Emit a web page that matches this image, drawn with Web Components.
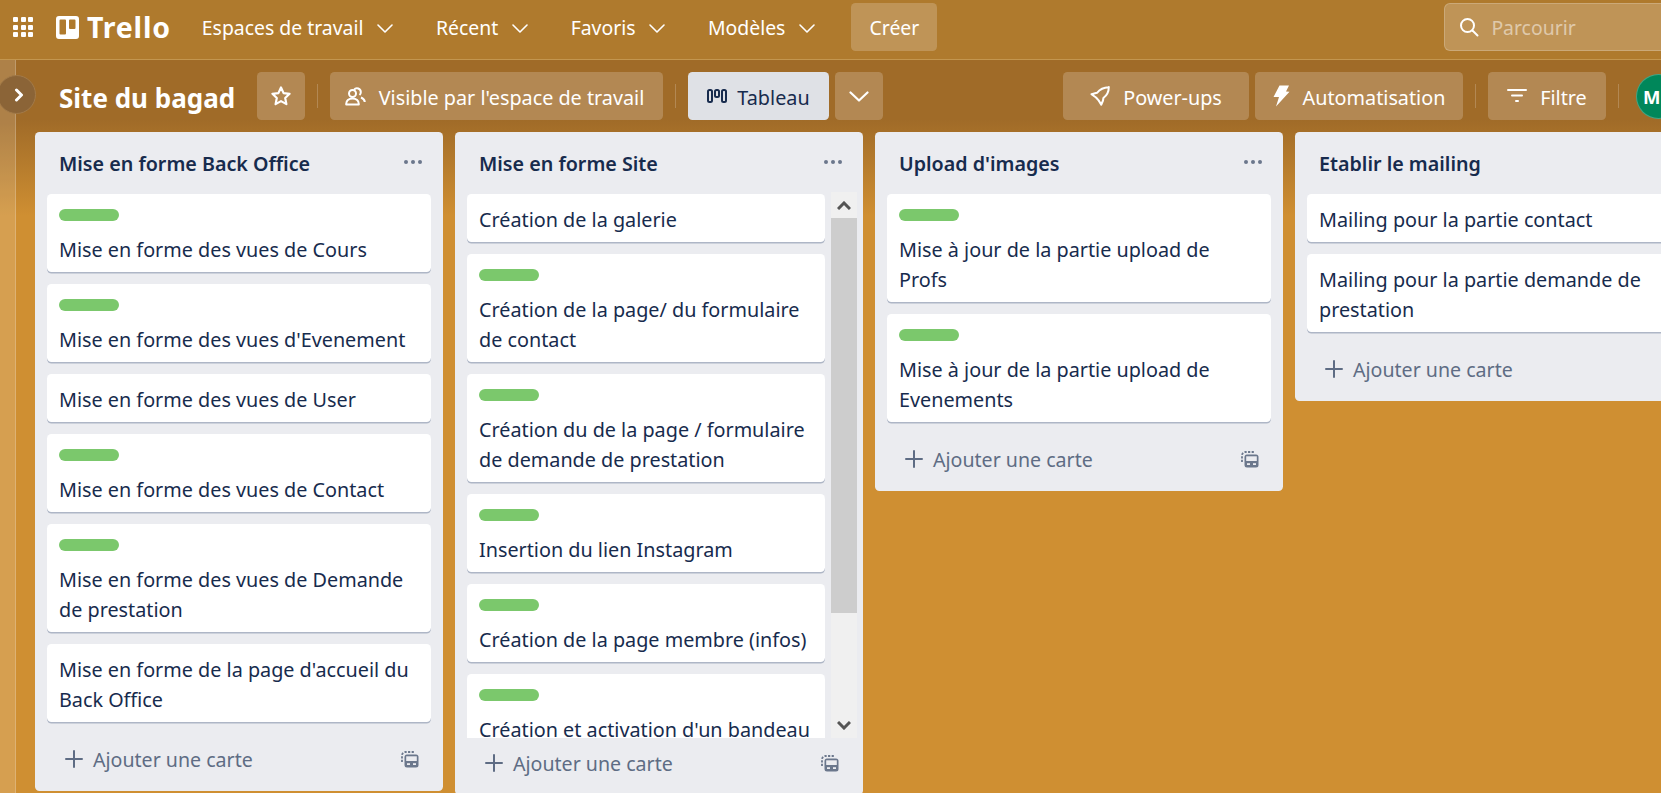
<!DOCTYPE html>
<html lang="fr">
<head>
<meta charset="utf-8">
<title>Site du bagad</title>
<style>
html, body { margin: 0; height: 793px; overflow: hidden; }
body { width: 1661px; font-family: "Noto Sans", "Open Sans", sans-serif; font-size: 19.8px; color: #172B4D; background: #CF8F32; }
</style>
</head>
<body>
<trello-app>
  <top-bar slot="top"></top-bar>
  <board-bar slot="bar"></board-bar>

  <trello-list slot="lists" title="Mise en forme Back Office" template>
    <trello-card labeled>Mise en forme des vues de Cours</trello-card>
    <trello-card labeled>Mise en forme des vues d'Evenement</trello-card>
    <trello-card>Mise en forme des vues de User</trello-card>
    <trello-card labeled>Mise en forme des vues de Contact</trello-card>
    <trello-card labeled>Mise en forme des vues de Demande de prestation</trello-card>
    <trello-card>Mise en forme de la page d'accueil du Back Office</trello-card>
  </trello-list>

  <trello-list slot="lists" title="Mise en forme Site" template scrolling>
    <trello-card>Création de la galerie</trello-card>
    <trello-card labeled>Création de la page/ du formulaire de contact</trello-card>
    <trello-card labeled>Création du de la page / formulaire de demande de prestation</trello-card>
    <trello-card labeled>Insertion du lien Instagram</trello-card>
    <trello-card labeled>Création de la page membre (infos)</trello-card>
    <trello-card labeled>Création et activation d'un bandeau</trello-card>
  </trello-list>

  <trello-list slot="lists" title="Upload d'images" template>
    <trello-card labeled>Mise à jour de la partie upload de Profs</trello-card>
    <trello-card labeled>Mise à jour de la partie upload de Evenements</trello-card>
  </trello-list>

  <trello-list slot="lists" title="Etablir le mailing" template>
    <trello-card>Mailing pour la partie contact</trello-card>
    <trello-card>Mailing pour la partie demande de prestation</trello-card>
  </trello-list>
</trello-app>

<script>
const ICONS = {
  chevron: '<svg width="16" height="9" viewBox="0 0 16 9" fill="none" stroke="currentColor" stroke-width="1.6" stroke-linecap="round" stroke-linejoin="round"><path d="M1 1l7 7 7-7"/></svg>',
  chevronBig: '<svg width="20" height="11" viewBox="0 0 20 11" fill="none" stroke="currentColor" stroke-width="2.2" stroke-linecap="round" stroke-linejoin="round"><path d="M1.500 1.500l8.500 8 8.500-8"/></svg>',
  star: '<svg width="22" height="22" viewBox="0 0 22 22" fill="none" stroke="currentColor" stroke-width="2.2" stroke-linejoin="round"><path d="M11 2.500l2.600 5.600 6 .7-4.400 4.200 1.200 6.100L11 16.100l-5.400 3 1.200-6.100L2.400 8.800l6-.7z"/></svg>',
  people: '<svg width="21" height="19" viewBox="0 0 21 19" fill="none" stroke="currentColor" stroke-width="2" stroke-linejoin="round"><circle cx="7.500" cy="6.500" r="3.500"/><path d="M1.200 17.500c-.3-3.800 2.600-6 6.300-6s6.600 2.200 6.300 6z"/><path d="M9 2.800a3.800 3.800 0 0 1 6.800 2.400c0 1.200-.5 2.200-1.300 2.900M16 10.500c2.200.9 3.600 2.500 3.800 4.500"/></svg>',
  board: '<svg width="20" height="14" viewBox="0 0 20 14" fill="none" stroke="#172B4D" stroke-width="2"><rect x="1" y="1" width="4" height="12" rx="1.500"/><rect x="8" y="1" width="4" height="7" rx="1.500"/><rect x="15" y="1" width="4" height="12" rx="1.500"/></svg>',
  rocket: '<svg width="20" height="20" viewBox="0 0 20 20" fill="none" stroke="currentColor" stroke-width="2" stroke-linejoin="round"><path d="M18.800 1.200C14 1.300 9.800 3.200 7 6.800L1.500 8.300l4.500 3.200 2.600 2.900 2.700 4.300 1.700-4.200.4-2.500c3.800-2.800 5.400-6.600 5.400-11z"/></svg>',
  bolt: '<svg width="17" height="22" viewBox="0 0 17 22" fill="currentColor"><path d="M6.500.5h9.500l-3 6 3.500.3L3 21.500l3-9.500H.5z"/></svg>',
  filter: '<svg width="20" height="14" viewBox="0 0 20 14" fill="currentColor"><rect y="0" width="20" height="2" rx="1"/><rect x="4" y="5.500" width="12" height="2" rx="1"/><rect x="8" y="11" width="4" height="2" rx="1"/></svg>',
  search: '<svg width="20" height="20" viewBox="0 0 20 20" fill="none" stroke="currentColor" stroke-width="2" stroke-linecap="round"><circle cx="8.500" cy="8.500" r="6.500"/><path d="M13.500 13.500l5 5"/></svg>',
  plus: '<svg width="18" height="18" viewBox="0 0 18 18" fill="none" stroke="currentColor" stroke-width="2" stroke-linecap="round"><path d="M9 1v16M1 9h16"/></svg>',
  template: '<svg width="18" height="18" viewBox="0 0 18 18"><path d="M1 12V5.500A3.500 3.500 0 0 1 4.500 2H14" fill="none" stroke="#6B778C" stroke-width="1.800" stroke-dasharray="2.200 1.400"/><rect x="3.500" y="4.500" width="14" height="13" rx="2.500" fill="#6B778C"/><rect x="5.200" y="6.300" width="10.600" height="4.700" fill="#EBECF0"/><rect x="6" y="13.200" width="3" height="1.800" fill="#EBECF0"/><rect x="12" y="13.200" width="3" height="1.800" fill="#EBECF0"/></svg>'
};

class TrelloApp extends HTMLElement {
  constructor() {
    super();
    this.attachShadow({ mode: 'open' }).innerHTML = `
      <style>
      :host { display: block; width: 1661px; height: 793px; overflow: hidden; position: relative;
        background: linear-gradient(#A06B28 0, #A06B28 120px, #CF8F32 216px); }
      .main { display: flex; height: 733px; }
      .strip { flex: none; width: 15px; border-right: 1px solid rgba(255,255,255,.2); background: rgba(255,255,255,.15); }
      .content { flex: none; width: 1760px; }
      .lists { display: flex; align-items: flex-start; gap: 12px; padding-left: 19px; }
      .toggle { position: absolute; left: -3px; top: 75px; width: 37px; height: 37px; border-radius: 50%;
        display: flex; align-items: center; justify-content: center; color: #fff;
        background: #8B6437; border: 1px solid #A27A49; }
      </style>
      <slot name="top"></slot>
      <div class="main">
        <div class="strip"></div>
        <div class="content">
          <slot name="bar"></slot>
          <div class="lists"><slot name="lists"></slot></div>
        </div>
      </div>
      <div class="toggle"><svg width="12" height="14" viewBox="0 0 12 14" fill="none" stroke="currentColor" stroke-width="3" stroke-linecap="round" stroke-linejoin="round" style="margin-left:4px"><path d="M3.500 2l5 5-5 5"/></svg></div>`;
  }
}

class TopBar extends HTMLElement {
  constructor() {
    super();
    this.attachShadow({ mode: 'open' }).innerHTML = `
      <style>
      :host { display: flex; align-items: center; box-sizing: border-box; width: 1760px; height: 60px;
        padding: 0 0 5px 13px; background: #AF7A2D; border-bottom: 1px solid #C3964F; color: #fff; font-size: 19.4px; }
      .apps { display: grid; grid-template-columns: repeat(3, 5px); gap: 2.500px; margin-right: 23px; }
      .apps i { width: 5px; height: 5px; background: #fff; border-radius: 1px; }
      .logo { display: flex; margin-right: 8px; }
      .word { font: 700 28.500px "Noto Sans", sans-serif; margin-right: 31px; letter-spacing: .8px; }
      nav-item { margin-right: 42.500px; }
      nav-item:last-of-type { margin-right: 36px; }
      .create { height: 48px; width: 86px; border-radius: 4.500px; background: rgba(255,255,255,.2);
        display: flex; align-items: center; justify-content: center; }
      .search { box-sizing: border-box; width: 300px; height: 48px; margin-left: 507px; border-radius: 6px;
        background: rgba(255,255,255,.2); border: 1.500px solid rgba(255,255,255,.2);
        display: flex; align-items: center; gap: 12px; padding-left: 14px; }
      .search span { color: rgba(255,255,255,.5); }
      .search svg { display: block; }
      </style>
      <div class="apps"><i></i><i></i><i></i><i></i><i></i><i></i><i></i><i></i><i></i></div>
      <div class="logo"><svg width="23" height="23" viewBox="0 0 23 23"><path fill="#fff" fill-rule="evenodd" d="M3 0h17a3 3 0 0 1 3 3v17a3 3 0 0 1-3 3H3a3 3 0 0 1-3-3V3a3 3 0 0 1 3-3zm1.500 3.500a1 1 0 0 0-1 1v13a1 1 0 0 0 1 1h4.500a1 1 0 0 0 1-1v-13a1 1 0 0 0-1-1zm9.500 0a1 1 0 0 0-1 1v7.500a1 1 0 0 0 1 1h4.500a1 1 0 0 0 1-1v-7.500a1 1 0 0 0-1-1z"/></svg></div>
      <div class="word">Trello</div>
      <nav-item>Espaces de travail</nav-item>
      <nav-item>Récent</nav-item>
      <nav-item>Favoris</nav-item>
      <nav-item>Modèles</nav-item>
      <div class="create">Créer</div>
      <div class="search">${ICONS.search}<span>Parcourir</span></div>`;
  }
}

class NavItem extends HTMLElement {
  constructor() {
    super();
    this.attachShadow({ mode: 'open' }).innerHTML = `
      <style>
      :host { display: inline-flex; align-items: center; gap: 14px; white-space: nowrap; }
      svg { display: block; margin-top: 2px; }
      </style>
      <slot></slot>${ICONS.chevron}`;
  }
}

class BoardBar extends HTMLElement {
  constructor() {
    super();
    this.attachShadow({ mode: 'open' }).innerHTML = `
      <style>
      :host { display: flex; align-items: center; box-sizing: border-box; width: 1700px; height: 72px;
        padding: 12px 0 12px 43px; color: #fff; }
      h1 { font: 700 26px "Noto Sans", sans-serif; margin: 3px 23px 0 0; white-space: nowrap; width: 175px; }
      .sep { flex: none; width: 1px; height: 24px; background: rgba(255,255,255,.2); margin: 0 12px; }
      .spacer { width: 180px; flex: none; }
      bar-button span { margin-top: 3px; }
      .avatar { flex: none; width: 45px; height: 45px; border-radius: 50%; background: #00875A; margin-left: 5px;
        border: 1px solid rgba(255,255,255,.25); box-sizing: border-box; padding-left: 6px;
        display: flex; align-items: center; font-weight: 700; font-size: 18.500px; }
      </style>
      <h1>Site du bagad</h1>
      <bar-button square>${ICONS.star}</bar-button>
      <div class="sep"></div>
      <bar-button style="width:333px;padding-right:4px">${ICONS.people}<span>Visible par l'espace de travail</span></bar-button>
      <div class="sep"></div>
      <bar-button active style="width:141px;gap:10px">${ICONS.board}<span>Tableau</span></bar-button>
      <bar-button square style="margin-left:6px">${ICONS.chevronBig}</bar-button>
      <div class="spacer"></div>
      <bar-button style="width:186px">${ICONS.rocket}<span>Power-ups</span></bar-button>
      <bar-button style="width:208px;margin-left:6px">${ICONS.bolt}<span>Automatisation</span></bar-button>
      <div class="sep"></div>
      <bar-button style="width:118px">${ICONS.filter}<span>Filtre</span></bar-button>
      <div class="sep"></div>
      <div class="avatar">M</div>`;
  }
}

class BarButton extends HTMLElement {
  constructor() {
    super();
    this.attachShadow({ mode: 'open' }).innerHTML = `
      <style>
      :host { display: flex; flex: none; align-items: center; justify-content: center; gap: 13px; box-sizing: border-box; height: 48px;
        border-radius: 4.500px; background: rgba(255,255,255,.2); color: #fff; white-space: nowrap; }
      :host([square]) { width: 48px; }
      :host([active]) { background: #DFE1E6; color: #172B4D; }
      </style>
      <slot></slot>`;
  }
}

class TrelloList extends HTMLElement {
  constructor() {
    super();
    const scrolling = this.hasAttribute('scrolling');
    const title = this.getAttribute('title');
    this.attachShadow({ mode: 'open' }).innerHTML = `
      <style>
      :host { display: block; flex: none; width: 408px; border-radius: 4.500px; background: #EBECF0; }
      :host([scrolling]) { height: 663px; }
      header { display: flex; align-items: center; justify-content: space-between; height: 60px; padding: 0 21px 0 24px; }
      h2 { font: 600 19.700px "Noto Sans", sans-serif; color: #172B4D; margin: 2px 0 0; }
      .dots { display: flex; gap: 2.500px; }
      .dots i { width: 4.500px; height: 4.500px; border-radius: 50%; background: #6B778C; }
      .body { display: flex; padding: 2px 12px 0; }
      .cards { flex: 1; min-width: 0; }
      :host([scrolling]) .body { padding: 0 6px 0 12px; height: 546px; gap: 6px; }
      :host([scrolling]) .cards { padding-top: 2px; overflow: hidden; }
      footer { display: flex; align-items: center; height: 50px; padding: 0 24px 7px 30px; color: #5E6C84; font-size: 19.600px; }
      footer svg { display: block; }
      .add { margin: 0 auto 0 10px; }
      </style>
      <header><h2>${title}</h2><div class="dots"><i></i><i></i><i></i></div></header>
      <div class="body">
        <div class="cards"><slot></slot></div>
        ${scrolling ? '<list-scrollbar></list-scrollbar>' : ''}
      </div>
      <footer>${ICONS.plus}<span class="add">Ajouter une carte</span>${ICONS.template}</footer>`;
  }
}

class ListScrollbar extends HTMLElement {
  constructor() {
    super();
    this.attachShadow({ mode: 'open' }).innerHTML = `
      <style>
      :host { display: flex; flex-direction: column; flex: none; width: 26px; background: #F0F0F0; }
      .arrow { height: 26px; display: flex; align-items: center; justify-content: center; }
      .thumb { height: 395px; background: #CDCDCD; }
      .rest { flex: 1; }
      </style>
      <div class="arrow"><svg width="14" height="9" viewBox="0 0 14 9" fill="none" stroke="#555" stroke-width="3"><path d="M1 8l6-6 6 6"/></svg></div>
      <div class="thumb"></div>
      <div class="rest"></div>
      <div class="arrow"><svg width="14" height="9" viewBox="0 0 14 9" fill="none" stroke="#555" stroke-width="3"><path d="M1 1l6 6 6-6"/></svg></div>`;
  }
}

class TrelloCard extends HTMLElement {
  constructor() {
    super();
    this.attachShadow({ mode: 'open' }).innerHTML = `
      <style>
      :host { display: block; box-sizing: border-box; margin-bottom: 12px; padding: 11px 12px 7px; background: #fff;
        border-radius: 4.500px; box-shadow: 0 1.500px 0 #AEB6C6; line-height: 30px; color: #172B4D; }
      :host([labeled]) { padding-top: 15px; }
      .label { display: none; width: 60px; height: 12px; border-radius: 6px; background: #7BC86C; margin-bottom: 14px; }
      :host([labeled]) .label { display: block; }
      </style>
      <div class="label"></div>
      <slot></slot>`;
  }
}

customElements.define('trello-app', TrelloApp);
customElements.define('top-bar', TopBar);
customElements.define('nav-item', NavItem);
customElements.define('board-bar', BoardBar);
customElements.define('bar-button', BarButton);
customElements.define('trello-list', TrelloList);
customElements.define('list-scrollbar', ListScrollbar);
customElements.define('trello-card', TrelloCard);
</script>
</body>
</html>
